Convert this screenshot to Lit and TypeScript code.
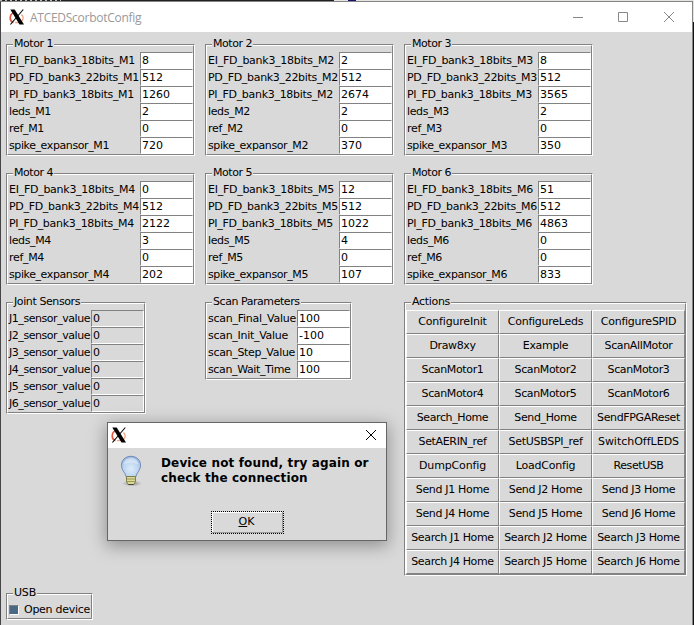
import { LitElement, html, css, svg } from "lit";
import { customElement, property } from "lit/decorators.js";

const xLogo = svg`
  <path d="M6.500 3.800C3 3.800 1.200 6 1.200 9c0 2.300 1.200 4 3.200 4.700" fill="none" stroke="#e2583e" stroke-width="1.600"/>
  <path d="M12.400 5.600c2.300 1.600 2.400 4.600.2 6.600-1.500 1.200-4 1.600-6.500 1.300" fill="none" stroke="#f2a583" stroke-width="1.300"/>
  <path d="M1.300.5h4.400l9.300 15h-4.500z" fill="#000"/>
  <path d="M14.300.5 1.400 15.500" stroke="#000" stroke-width="1.100"/>`;

const advances: Record<string, number> = {};
const setAdvance = (chars: string, w: number) => [...chars].forEach((c) => (advances[c] = w));
setAdvance("Jil I", 3);
setAdvance("frt-", 4);
setAdvance("_s", 5);
setAdvance("aceokvxyzFPLT", 6);
setAdvance("bdghnpquEVASRBK0123456789", 7);
setAdvance("DHNU", 8);
setAdvance("MwOG", 9);
setAdvance("W", 10);
setAdvance("m", 10.5);
setAdvance("C", 7.5);

@customElement("tk-text")
class TkText extends LitElement {
  @property() text = "";
  @property({ type: Number }) underline = -1;
  static styles = css`
    :host { display: inline-block; white-space: pre; }
    span { display: inline-block; }
  `;
  updated() {
    const span = this.renderRoot.querySelector("span") as HTMLElement;
    span.style.letterSpacing = "0px";
    const natural = span.getBoundingClientRect().width;
    const target = [...this.text].reduce((sum, c) => sum + (advances[c] ?? 7), 0);
    span.style.letterSpacing = `${(target - natural) / this.text.length}px`;
  }
  render() {
    const u = this.underline;
    return u < 0
      ? html`<span>${this.text}</span>`
      : html`<span>${this.text.slice(0, u)}<u>${this.text[u]}</u>${this.text.slice(u + 1)}</span>`;
  }
}

@customElement("group-box")
class GroupBox extends LitElement {
  @property() label = "";
  static styles = css`
    :host { display: block; }
    .frame { position: relative; box-sizing: border-box; border: 1px solid #828282; border-right-color: #fff; border-bottom-color: #fff; }
    .inner { border: 1px solid #fff; border-right-color: #828282; border-bottom-color: #828282; padding-top: 6px; }
    .legend { position: absolute; left: 6px; top: -9px; height: 16px; line-height: 16px; padding: 0 1px; background: #d9d9d9; white-space: nowrap; }
  `;
  render() {
    return html`<div class="frame"><div class="inner"><slot></slot></div><div class="legend"><tk-text .text=${this.label}></tk-text></div></div>`;
  }
}

@customElement("field-row")
class FieldRow extends LitElement {
  @property() name = "";
  @property() value = "";
  @property({ type: Boolean, reflect: true }) readonly = false;
  static styles = css`
    :host { display: flex; height: 17px; line-height: 17px; white-space: nowrap; }
    .name { flex: 1; min-width: 0; padding-left: 1px; }
    .value { box-sizing: border-box; width: 53px; height: 17px; line-height: 15px; border: 1px solid #828282; border-right-color: #fff; border-bottom-color: #fff; background: #fff; padding-left: 1px; }
    :host([readonly]) .value { background: #d9d9d9; }
  `;
  render() {
    return html`<div class="name"><tk-text .text=${this.name}></tk-text></div><div class="value"><tk-text .text=${this.value}></tk-text></div>`;
  }
}

const motors = [
  ["8", "512", "1260", "2", "0", "720"],
  ["2", "512", "2674", "2", "0", "370"],
  ["8", "512", "3565", "2", "0", "350"],
  ["0", "512", "2122", "3", "0", "202"],
  ["12", "512", "1022", "4", "0", "107"],
  ["51", "512", "4863", "0", "0", "833"],
];
const motorFields = ["EI_FD_bank3_18bits", "PD_FD_bank3_22bits", "PI_FD_bank3_18bits", "leds", "ref", "spike_expansor"];
const scan = [["scan_Final_Value", "100"], ["scan_Init_Value", "-100"], ["scan_Step_Value", "10"], ["scan_Wait_Time", "100"]];
const actions = [
  "ConfigureInit", "ConfigureLeds", "ConfigureSPID", "Draw8xy", "Example", "ScanAllMotor",
  "ScanMotor1", "ScanMotor2", "ScanMotor3", "ScanMotor4", "ScanMotor5", "ScanMotor6",
  "Search_Home", "Send_Home", "SendFPGAReset", "SetAERIN_ref", "SetUSBSPI_ref", "SwitchOffLEDS",
  "DumpConfig", "LoadConfig", "ResetUSB", "Send J1 Home", "Send J2 Home", "Send J3 Home",
  "Send J4 Home", "Send J5 Home", "Send J6 Home", "Search J1 Home", "Search J2 Home", "Search J3 Home",
  "Search J4 Home", "Search J5 Home", "Search J6 Home",
];

@customElement("app-root")
class AppRoot extends LitElement {
  static styles = css`
    :host { display: block; position: relative; width: 694px; height: 625px; overflow: hidden; background: linear-gradient(#e4e4e0 22px, #111113 22px); color: #000; font: 11px "DejaVu Sans", sans-serif; }
    .behind { display: flex; height: 1px; }
    .behind .dark { width: 334px; background: repeating-linear-gradient(90deg, #b5b5b5 0 2px, #202022 2px 5px) 0 0 / 61px 1px no-repeat #202022; }
    .behind .light { flex: 1; background: linear-gradient(#14146e, #14146e) 14px 0 / 8px 1px no-repeat #e4e4e0; }
    .window { box-sizing: border-box; width: 693px; height: 624px; border: 1px solid #858585; border-left-color: #454547; border-bottom: 0; background: #d9d9d9; }
    .title { display: flex; align-items: center; height: 30px; background: #fff; color: #999; font: 12px "Open Sans", sans-serif; }
    .title .logo { width: 16px; height: 16px; margin: 0 5px 0 8px; }
    .title .text { flex: 1; letter-spacing: -.27px; }
    .controls { width: 103px; height: 12px; margin-right: 16px; }
    .content { display: grid; grid-template-columns: 189px 189px 283px; column-gap: 10px; grid-template-rows: 129px 129px 291px auto; padding: 12px 0 0 5px; align-items: start; justify-items: start; }
    .motor { width: 189px; }
    .joint { width: 140px; }
    .scan { width: 147px; }
    .actions { width: 283px; }
    .usb { width: 87px; }
    .buttons { display: grid; grid-template-columns: repeat(3, 93px); grid-auto-rows: 24px; }
    .button { box-sizing: border-box; border: 1px solid #fff; border-right-color: #828282; border-bottom-color: #828282; text-align: center; line-height: 21px; white-space: nowrap; }
    .check { display: flex; align-items: center; height: 17px; padding-left: 1px; gap: 5px; white-space: nowrap; }
    .box { flex: none; box-sizing: border-box; width: 10px; height: 10px; background: #4a6984; border: 1px solid #828282; border-right-color: #fff; border-bottom-color: #fff; }
    .dialog { position: absolute; left: 107px; top: 422px; box-sizing: border-box; width: 280px; height: 119px; border: 1px solid #666; background: #d9d9d9; box-shadow: 0 4px 16px 1px rgba(0,0,0,.34); }
    .dtitle { display: flex; justify-content: space-between; align-items: flex-start; box-sizing: border-box; height: 25px; padding: 4px 9px 0 3px; background: #fff; }
    .dtitle .close { margin-top: 2px; }
    .message { display: flex; height: 62px; }
    .bulb { width: 32px; height: 32px; margin: 7px 14px 0 7px; }
    .message p { margin: 8px 0 0; font: bold 12px/15px "DejaVu Sans", sans-serif; letter-spacing: .14px; white-space: nowrap; }
    .ok { box-sizing: border-box; width: 73px; height: 23px; margin: 1px auto 0 103px; padding-right: 2px; border: 1px dotted #000; line-height: 20px; text-align: center; box-shadow: inset -1px -1px #999, inset 1px 1px #fff; }
    svg { display: block; }
  `;
  motor(i: number) {
    return html`<group-box class="motor" label="Motor ${i + 1}">
      ${motorFields.map((f, k) => html`<field-row name="${f}_M${i + 1}" value=${motors[i][k]}></field-row>`)}
    </group-box>`;
  }
  render() {
    return html`
      <div class="behind"><div class="dark"></div><div class="light"></div></div>
      <div class="window">
        <div class="title">
          <svg class="logo" viewBox="0 0 16 16">${xLogo}</svg>
          <span class="text">ATCEDScorbotConfig</span>
          <svg class="controls" viewBox="0 0 103 12" fill="none" stroke="#888">
            <path d="M0 6.500h10M45.500 1.500h9v9h-9zM91 1l10 10M101 1L91 11"/>
          </svg>
        </div>
        <div class="content">
          ${motors.map((_, i) => this.motor(i))}
          <group-box class="joint" label="Joint Sensors">
            ${[1, 2, 3, 4, 5, 6].map((n) => html`<field-row readonly name="J${n}_sensor_value" value="0"></field-row>`)}
          </group-box>
          <group-box class="scan" label="Scan Parameters">
            ${scan.map(([n, v]) => html`<field-row name=${n} value=${v}></field-row>`)}
          </group-box>
          <group-box class="actions" label="Actions">
            <div class="buttons">${actions.map((a) => html`<div class="button"><tk-text .text=${a}></tk-text></div>`)}</div>
          </group-box>
          <group-box class="usb" label="USB">
            <div class="check"><span class="box"></span><tk-text text="Open device"></tk-text></div>
          </group-box>
        </div>
      </div>
      <div class="dialog">
        <div class="dtitle">
          <svg width="16" height="16" viewBox="0 0 16 16">${xLogo}</svg>
          <svg class="close" width="12" height="12" viewBox="0 0 12 12" stroke="#000"><path d="M1 1l10 10M11 1L1 11"/></svg>
        </div>
        <div class="message">
          <svg class="bulb" viewBox="0 0 32 32">
            <defs>
              <radialGradient id="glass" cx=".5" cy=".6" r=".6"><stop offset="0" stop-color="#dcebfa"/><stop offset=".65" stop-color="#bdd5f0"/><stop offset="1" stop-color="#94b3e0"/></radialGradient>
              <radialGradient id="shade"><stop offset="0" stop-color="#555" stop-opacity=".6"/><stop offset="1" stop-color="#555" stop-opacity="0"/></radialGradient>
            </defs>
            <ellipse cx="17" cy="28.500" rx="10" ry="3" fill="url(#shade)"/>
            <path d="M16 1.300c-5.700 0-9.600 4-9.600 9 0 4.900 3.600 6.700 4.900 11.700h9.400c1.300-5 4.900-6.800 4.900-11.700 0-5-3.900-9-9.600-9z" fill="url(#glass)" stroke="#6a84b4" stroke-width=".9"/>
            <path d="M8.500 9.500C9 5.500 12 3 16 3s7 2.500 7.500 6.500c-4-2.200-11-2.200-15 0z" fill="#fff" opacity=".35"/>
            <path d="M11.500 21.500h9v5.300l-1.800 2.700h-5.400l-1.800-2.700z" fill="#dcd994" stroke="#75763f" stroke-width=".9"/>
            <path d="M12 24h8M12 26.500h8" stroke="#8b8b50" stroke-width=".8"/>
            <path d="M13.500 29.500h5" stroke="#444"/>
          </svg>
          <p>Device not found, try again or<br>check the connection</p>
        </div>
        <div class="ok"><tk-text text="OK" underline="0"></tk-text></div>
      </div>`;
  }
}
